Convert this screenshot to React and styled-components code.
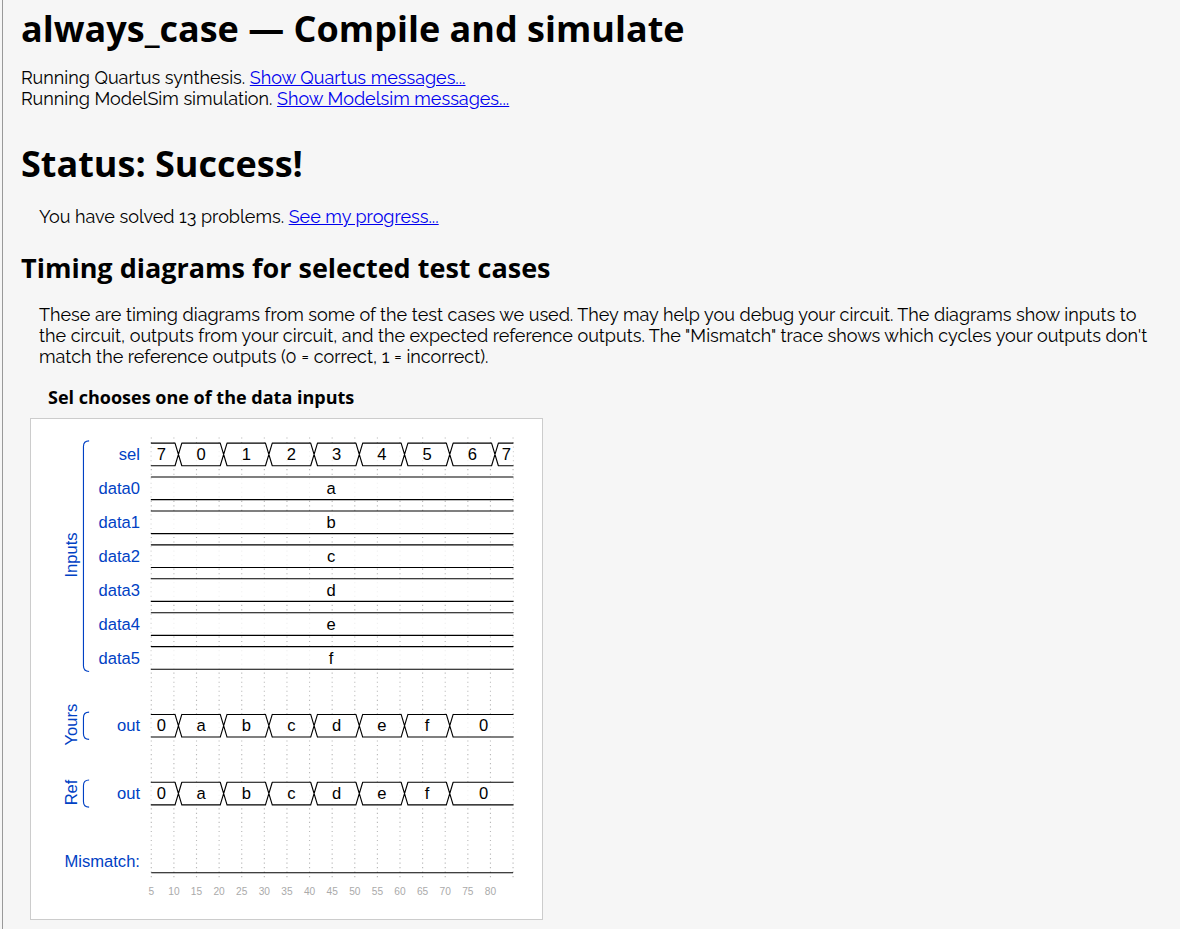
import React from "react";
import styled, { createGlobalStyle } from "styled-components";

const GlobalStyle = createGlobalStyle`
  body {
    margin: 0;
    background: #f6f6f6;
    color: #000;
    font: 400 18px/21px Raleway, Lato, sans-serif;
    font-variant-numeric: oldstyle-nums;
  }
`;

const Page = styled.main`
  box-sizing: border-box;
  min-height: 100vh;
  margin-left: 2px;
  padding: 4px 18px 9px;
  border-left: 1px solid #999;
`;

const Heading = styled.h1`
  margin: 0;
  font: 700 36px/50px "Open Sans", sans-serif;
`;

const SubHeading = styled.h2`
  margin: 22px 0 18px;
  font: 700 27px/37px "Open Sans", sans-serif;
`;

const CaseTitle = styled.h3`
  margin: 18px 27px 8px;
  font: 700 18px/25px "Open Sans", sans-serif;
`;

const Log = styled.div`
  margin: 13px 0 30px;
`;

const LogLine = styled.div``;

const Paragraph = styled.p`
  margin: 0 0 0 18px;
`;

const StatusNote = styled(Paragraph)`
  margin-top: 17px;
`;

const Link = styled.a`
  color: #0000ee;
`;

const Panel = styled.figure`
  box-sizing: border-box;
  width: fit-content;
  max-width: 100%;
  margin: 0 9px;
  border: 1px solid #ccc;
  background: #fff;
`;

const Wave = styled.svg`
  display: block;
  max-width: 100%;
  font-family: "Liberation Sans", sans-serif;
`;

const SignalName = styled.text`
  font-size: 11pt;
  fill: #0041c4;
  text-anchor: end;
`;

const GroupName = styled(SignalName)`
  text-anchor: middle;
`;

const Value = styled.text`
  font-size: 11pt;
  text-anchor: middle;
`;

const Tick = styled.text`
  font-size: 9px;
  fill: #aaa;
  text-anchor: middle;
`;

const LENGTH = 320;
const ROW = 30;

const outValues = [[9, "0"], [44, "a"], [84, "b"], [124, "c"], [164, "d"], [204, "e"], [244, "f"], [294, "0"]];
const selValues = [[9, "7"], [44, "0"], [84, "1"], [124, "2"], [164, "3"], [204, "4"], [244, "5"], [284, "6"], [314, "7"]];

const signals = [
  { row: 0, name: "sel", values: selValues },
  ...["a", "b", "c", "d", "e", "f"].map((v, i) => ({ row: i + 1, name: `data${i}`, values: [[159, v]] })),
  { row: 8, name: "out", values: outValues },
  { row: 10, name: "out", values: outValues },
];

const groups = [
  { name: "Inputs", from: -2, to: 202 },
  { name: "Yours", from: 238, to: 262 },
  { name: "Ref", from: 298, to: 322 },
];

function Bus({ row, name, values }) {
  const changes = values.slice(1).map((_, i) => 24 + 40 * i);
  const edges = [0, ...changes, LENGTH];
  const path = edges
    .slice(0, -1)
    .map((x, i) => {
      const start = i === 0 ? 0 : x + 3;
      const next = edges[i + 1];
      const end = next === LENGTH ? LENGTH : next - 3;
      const cross = next === LENGTH ? "" : `M${end},0 L${end + 6},20 M${end},20 L${end + 6},0`;
      return `M${start},0 H${end} M${start},20 H${end} ${cross}`;
    })
    .join(" ");
  return (
    <g transform={`translate(0 ${row * ROW})`}>
      <rect width={LENGTH} height="20" fill="#fff" fillOpacity="0.8" />
      <path d={path} fill="none" stroke="#000" strokeLinecap="round" />
      <SignalName x="-10" y="15">{name}</SignalName>
      {values.map(([x, v], i) => (
        <Value key={i} x={x} y="15">{v}</Value>
      ))}
    </g>
  );
}

function Group({ name, from, to }) {
  return (
    <g>
      <path
        d={`M-55,${from} Q-60,${from} -60,${from + 5} V${to - 5} Q-60,${to} -55,${to}`}
        fill="none"
        stroke="#0041c4"
      />
      <GroupName transform={`translate(-66 ${(from + to) / 2 - 1}) rotate(-90)`}>{name}</GroupName>
    </g>
  );
}

function TimingDiagram() {
  return (
    <Wave width="511" height="500" viewBox="0 0 452 442" role="img" aria-label="Timing diagram">
      <g transform="translate(106.4 21.2)">
        {Array.from({ length: 17 }, (_, i) => (
          <path key={i} d={`M${i * 20},-5 V385`} stroke="#888" strokeWidth="1" strokeDasharray="1 3" strokeOpacity="0.6" />
        ))}
        {signals.map((s) => (
          <Bus key={s.row} {...s} />
        ))}
        <SignalName x="-10" y="375">Mismatch:</SignalName>
        <path d={`M0,380 H${LENGTH}`} stroke="#000" />
        {Array.from({ length: 16 }, (_, i) => (
          <Tick key={i} x={i * 20} y="400">{(i + 1) * 5}</Tick>
        ))}
        {groups.map((g) => (
          <Group key={g.name} {...g} />
        ))}
      </g>
    </Wave>
  );
}

export default function App() {
  return (
    <>
      <GlobalStyle />
      <Page>
        <Heading>always_case — Compile and simulate</Heading>
        <Log>
          <LogLine>Running Quartus synthesis. <Link href="#quartus">Show Quartus messages...</Link></LogLine>
          <LogLine>Running ModelSim simulation. <Link href="#modelsim">Show Modelsim messages...</Link></LogLine>
        </Log>
        <Heading>Status: Success!</Heading>
        <StatusNote>You have solved 13 problems. <Link href="#progress">See my progress...</Link></StatusNote>
        <SubHeading>Timing diagrams for selected test cases</SubHeading>
        <Paragraph>
          These are timing diagrams from some of the test cases we used. They may help you debug your circuit. The
          diagrams show inputs to the circuit, outputs from your circuit, and the expected reference outputs. The
          "Mismatch" trace shows which cycles your outputs don't match the reference outputs (0 = correct, 1 =
          incorrect).
        </Paragraph>
        <CaseTitle>Sel chooses one of the data inputs</CaseTitle>
        <Panel>
          <TimingDiagram />
        </Panel>
      </Page>
    </>
  );
}
